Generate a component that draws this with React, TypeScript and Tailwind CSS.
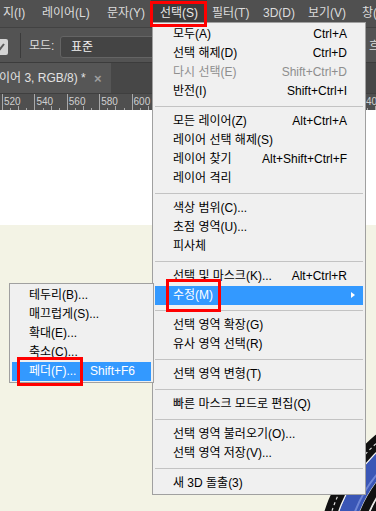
import React from "react";

type Row =
  | { label: string; sc?: string; disabled?: boolean; hl?: boolean; arrow?: boolean }
  | "sep";

const mainRows: Row[] = [
  { label: "모두(A)", sc: "Ctrl+A" },
  { label: "선택 해제(D)", sc: "Ctrl+D" },
  { label: "다시 선택(E)", sc: "Shift+Ctrl+D", disabled: true },
  { label: "반전(I)", sc: "Shift+Ctrl+I" },
  "sep",
  { label: "모든 레이어(Z)", sc: "Alt+Ctrl+A" },
  { label: "레이어 선택 해제(S)" },
  { label: "레이어 찾기", sc: "Alt+Shift+Ctrl+F" },
  { label: "레이어 격리" },
  "sep",
  { label: "색상 범위(C)..." },
  { label: "초점 영역(U)..." },
  { label: "피사체" },
  "sep",
  { label: "선택 및 마스크(K)...", sc: "Alt+Ctrl+R" },
  { label: "수정(M)", hl: true, arrow: true },
  "sep",
  { label: "선택 영역 확장(G)" },
  { label: "유사 영역 선택(R)" },
  "sep",
  { label: "선택 영역 변형(T)" },
  "sep",
  { label: "빠른 마스크 모드로 편집(Q)" },
  "sep",
  { label: "선택 영역 불러오기(O)..." },
  { label: "선택 영역 저장(V)..." },
  "sep",
  { label: "새 3D 돌출(3)" },
];

const subRows: Row[] = [
  { label: "테두리(B)..." },
  { label: "매끄럽게(S)..." },
  { label: "확대(E)..." },
  { label: "축소(C)..." },
  { label: "페더(F)...", sc: "Shift+F6", hl: true },
];

function MenuRow({ row, pl }: { row: Row; pl: "main" | "sub" }) {
  if (row === "sep") {
    return (
      <div className="mx-[2px] flex h-[11px] items-center">
        <div className="h-px w-full bg-[#c3c3c3]" />
      </div>
    );
  }
  const color = row.hl
    ? "bg-[#3399ff] text-white"
    : row.disabled
    ? "text-[#8e8e8e]"
    : "text-black";
  const pad = pl === "main" ? "pl-[18px]" : "pl-[17px]";
  return (
    <div
      className={`relative mx-[2px] flex h-[19px] items-center justify-between ${pad} pr-[16px] leading-[19px] whitespace-nowrap ${color}`}
    >
      <span>{row.label}</span>
      {row.sc && <span>{row.sc}</span>}
      {row.arrow && (
        <span className="absolute right-[8px] top-[6px] h-0 w-0 border-y-[3.5px] border-l-[4px] border-y-transparent border-l-white" />
      )}
    </div>
  );
}

const rulerNums = ["520", "540", "560", "580", "600"];

function RulerTicks() {
  const lines: React.ReactNode[] = [];
  for (let k = 0; k < 12; k++) {
    const x = 2.5 + 32.4 * k;
    lines.push(<line key={`M${k}`} x1={x} y1={0} x2={x} y2={17} />);
    lines.push(<line key={`h${k}`} x1={x + 16.2} y1={12} x2={x + 16.2} y2={17} />);
    lines.push(<line key={`q${k}`} x1={x + 8.1} y1={14} x2={x + 8.1} y2={17} />);
    lines.push(<line key={`r${k}`} x1={x + 24.3} y1={14} x2={x + 24.3} y2={17} />);
  }
  return (
    <svg className="absolute inset-0" width="376" height="17" viewBox="0 0 376 17">
      <g stroke="#a9a9a9" strokeWidth="1" shapeRendering="crispEdges">
        {lines}
      </g>
    </svg>
  );
}

export default function App() {
  return (
    <div className="relative h-[511px] w-[376px] overflow-hidden bg-[#f3f3e5] font-['Liberation_Sans','Noto_Sans_CJK_KR',sans-serif] text-[12px]">
      {/* Menu bar */}
      <div className="flex h-[27px] items-stretch overflow-hidden bg-[#505050] leading-[27px] whitespace-nowrap text-[#dcdcdc]">
        <div className="w-[42px] shrink-0 pl-[3px]">지(I)</div>
        <div className="w-[65px] shrink-0">레이어(L)</div>
        <div className="w-[44px] shrink-0">문자(Y)</div>
        <div className="w-[56px] shrink-0 bg-[#3c3c3c] pl-[9px] text-[#e8e8e8]">선택(S)</div>
        <div className="w-[56px] shrink-0 pl-[5px]">필터(T)</div>
        <div className="w-[45px] shrink-0">3D(D)</div>
        <div className="w-[54px] shrink-0">보기(V)</div>
        <div className="shrink-0">창(W)</div>
      </div>

      {/* Options bar */}
      <div className="flex h-[35px] items-start overflow-hidden border-t border-[#424242] bg-[#535353] whitespace-nowrap text-[#dedede]">
        <div className="-ml-[8px] mt-[11px] flex h-[16px] w-[16px] shrink-0 items-center justify-center rounded-[2px] bg-[#d4d4d4]">
          <svg width="12" height="12" viewBox="0 0 12 12">
            <polyline points="2,6.5 5,9.5 10,3" fill="none" stroke="#5a5a5a" strokeWidth="2" />
          </svg>
        </div>
        <div className="ml-[12px] mt-[5px] h-[25px] w-px shrink-0 bg-[#3b3b3b]" />
        <div className="ml-[8px] mt-[9px] w-[31px] shrink-0 leading-[19px]">모드:</div>
        <div className="mt-[8px] flex h-[22px] w-[282px] shrink-0 items-center rounded-[3px] border border-[#646464] bg-[#444444] pl-[10px] text-[#f0f0f0]">
          표준
        </div>
        <div className="ml-[27px] mt-[9px] shrink-0 leading-[19px]">흐름:</div>
      </div>

      {/* Tab bar */}
      <div className="flex h-[31px] border-t border-[#3c3c3c] bg-[#474747] whitespace-nowrap">
        <div className="flex h-full w-[111px] items-center bg-[#565656]">
          <span className="-ml-[1px] w-[95px] text-[#e2e2e2]">이어 3, RGB/8) *</span>
          <span className="text-[13px] font-bold leading-none text-[#9e9e9e]">×</span>
        </div>
      </div>

      {/* Ruler */}
      <div className="relative h-[17px] overflow-hidden border-t border-[#3f3f3f] bg-[#4f4f4f]">
        <RulerTicks />
        <div className="relative flex pl-[4px] pt-[3px] text-[10px] leading-[10px] whitespace-nowrap text-[#cfcfcf]">
          {rulerNums.map((n) => (
            <span key={n} className="w-[32.4px] shrink-0">
              {n}
            </span>
          ))}
          <span className="w-[194.4px] shrink-0" />
          <span className="shrink-0">740</span>
        </div>
      </div>

      {/* Canvas */}
      <div className="h-[115px] bg-white" />
      <div className="h-[286px] bg-[#f3f3e5]" />

      {/* picture on canvas (bottom right) */}
      <svg
        className="absolute left-[290px] top-[420px]"
        width="86"
        height="91"
        viewBox="290 420 86 91"
      >
        <circle cx="480" cy="560" r="108" fill="#3a56b6" />
        <circle cx="480" cy="560" r="115" fill="none" stroke="#111" strokeWidth="10" />
        <circle cx="480" cy="560" r="120.5" fill="none" stroke="#e8e8e8" strokeWidth="1.5" />
        <circle cx="480" cy="560" r="125.5" fill="none" stroke="#111" strokeWidth="8" />
        <circle cx="480" cy="560" r="139.5" fill="none" stroke="#3a56b6" strokeWidth="19" />
        <circle cx="480" cy="560" r="134" fill="none" stroke="#6f86d6" strokeWidth="2" />
        <circle cx="480" cy="560" r="149.5" fill="none" stroke="#f2f2f2" strokeWidth="1.5" />
        <circle cx="480" cy="560" r="156.5" fill="none" stroke="#111" strokeWidth="13" />
        <circle
          cx="480"
          cy="560"
          r="156"
          fill="none"
          stroke="#e0e0e0"
          strokeWidth="1.2"
          strokeDasharray="3 3"
        />
      </svg>

      {/* Main dropdown menu */}
      <div className="absolute left-[152px] top-[22px] w-[214px] border border-[#a0a0a0] bg-[#f0f0f0] pb-[1px] pt-[2px]">
        {mainRows.map((r, i) => (
          <MenuRow key={i} row={r} pl="main" />
        ))}
      </div>

      {/* Submenu */}
      <div className="absolute left-[9px] top-[283px] w-[145px] border border-[#a0a0a0] bg-[#f0f0f0] pb-[1px] pt-[2px]">
        {subRows.map((r, i) => (
          <MenuRow key={i} row={r} pl="sub" />
        ))}
      </div>

      {/* Red annotation boxes */}
      <div className="absolute left-[150px] top-[1px] h-[26px] w-[57px] border-[3px] border-[#ff0000]" />
      <div className="absolute left-[166px] top-[279px] h-[33px] w-[55px] border-[3px] border-[#ff0000]" />
      <div className="absolute left-[17px] top-[357px] h-[29px] w-[66px] border-[3px] border-[#ff0000]" />
    </div>
  );
}
